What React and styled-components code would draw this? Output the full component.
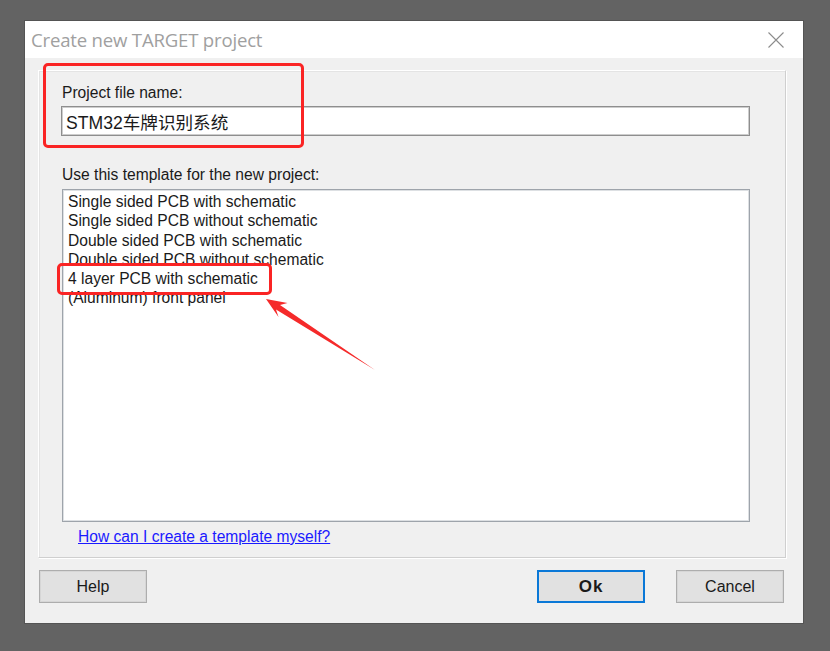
import React from "react";
import styled, { createGlobalStyle } from "styled-components";

const Global = createGlobalStyle`
  html, body { margin: 0; padding: 0; }
  body {
    background: #636363;
    width: 830px;
    height: 651px;
    overflow: hidden;
    font-family: "Liberation Sans", Arial, "Noto Sans CJK SC", sans-serif;
  }
`;

const Page = styled.div`
  padding: 21px 0 0 25px;
`;

const Dialog = styled.div`
  position: relative;
  width: 778px;
  height: 602px;
  background: #f0f0f0;
  display: flex;
  flex-direction: column;
  box-shadow: 0 0 0 1px rgba(0, 0, 0, 0.15);
`;

const TitleBar = styled.div`
  height: 37px;
  flex: none;
  background: #ffffff;
  display: flex;
  align-items: center;
  justify-content: space-between;
  padding: 0 19px 0 6px;
`;

const Title = styled.div`
  font-family: "Open Sans", "Noto Sans", sans-serif;
  font-size: 18.6px;
  color: #a0a0a0;
  letter-spacing: -0.2px;
`;

const CloseIcon = styled.svg`
  width: 16px;
  height: 16px;
  display: block;
`;

const Body = styled.div`
  flex: 1;
  display: flex;
  flex-direction: column;
  padding: 12px 17px 20px 13px;
`;

const Frame = styled.div`
  box-sizing: border-box;
  height: 488px;
  border-top: 1px solid #ffffff;
  border-left: 1px solid #ffffff;
  border-right: 1px solid #cfcfcf;
  border-bottom: 1px solid #cfcfcf;
  box-shadow: 1px 1px 0 #ffffff, inset 1px 1px 0 #e4e4e4;
  display: flex;
  flex-direction: column;
  padding: 12px 35px 0 22px;
`;

const Label = styled.div`
  font-size: 15.6px;
  line-height: 19px;
  color: #1a1a1a;
  padding-left: 1px;
  margin-top: ${(p) => p.$gap || 0}px;
`;

const Input = styled.div`
  box-sizing: border-box;
  margin-top: 4px;
  height: 30px;
  background: #ffffff;
  border: 1px solid #8e8e8e;
  box-shadow: inset 0 0 0 1px #cdcdcd;
  display: flex;
  align-items: center;
  padding-left: 4px;
  font-size: 17.6px;
  color: #1a1a1a;
  font-family: "Liberation Sans", Arial, "Noto Sans CJK SC", sans-serif;
`;

const ListBox = styled.div`
  box-sizing: border-box;
  margin: 5px 0 0 1px;
  height: 333px;
  background: #ffffff;
  border: 1px solid #9ea4ab;
  box-shadow: inset 0 0 0 1px #dde0e3;
  padding: 2px 5px;
`;

const ListItem = styled.div`
  font-size: 15.6px;
  line-height: 19.3px;
  color: #1a1a1a;
  white-space: nowrap;
`;

const Link = styled.a`
  margin: 5px 0 0 17px;
  font-size: 15.6px;
  line-height: 19px;
  color: #1a1aff;
  text-decoration: underline;
  cursor: pointer;
  align-self: flex-start;
`;

const ButtonRow = styled.div`
  margin-top: 12px;
  display: flex;
  justify-content: space-between;
  align-items: center;
  padding: 0 2px 0 1px;
`;

const ButtonGroup = styled.div`
  display: flex;
  gap: 31px;
`;

const Button = styled.button`
  box-sizing: border-box;
  width: 108px;
  height: 33px;
  background: #e1e1e1;
  border: ${(p) => (p.$primary ? "2px solid #0a78d7" : "1px solid #adadad")};
  box-shadow: ${(p) => (p.$primary ? "none" : "inset 0 0 0 1px #d6d6d6")};
  font-family: "Liberation Sans", Arial, sans-serif;
  font-size: ${(p) => (p.$primary ? "17px" : "16px")};
  font-weight: ${(p) => (p.$primary ? 700 : 400)};
  color: #1a1a1a;
  padding: 0;
  letter-spacing: ${(p) => (p.$primary ? "1px" : "0")};
`;

const Annotation = styled.div`
  position: absolute;
  left: ${(p) => p.$x}px;
  top: ${(p) => p.$y}px;
  width: ${(p) => p.$w}px;
  height: ${(p) => p.$h}px;
  box-sizing: border-box;
  border: 3px solid #fa2424;
  border-radius: 5px;
  pointer-events: none;
`;

const ArrowLayer = styled.svg`
  position: absolute;
  left: 0;
  top: 0;
  width: 778px;
  height: 602px;
  pointer-events: none;
`;

const templates = [
  "Single sided PCB with schematic",
  "Single sided PCB without schematic",
  "Double sided PCB with schematic",
  "Double sided PCB without schematic",
  "4 layer PCB with schematic",
  "(Aluminum) front panel",
];

// arrow geometry in dialog coordinates (page minus 25,21)
const ox = 25;
const oy = 21;
const pts = [
  [266, 299],
  [287.5, 303],
  [280, 305],
  [375, 370],
  [276, 309.5],
  [278.5, 317],
]
  .map(([x, y]) => `${x - ox},${y - oy}`)
  .join(" ");

export default function App() {
  return (
    <>
      <Global />
      <Page>
        <Dialog>
          <TitleBar>
            <Title>Create new TARGET project</Title>
            <CloseIcon viewBox="0 0 16 16">
              <path d="M0.5 0.5 L15.5 15.5 M15.5 0.5 L0.5 15.5" stroke="#8c8c8c" strokeWidth="1.1" fill="none" />
            </CloseIcon>
          </TitleBar>
          <Body>
            <Frame>
              <Label>Project file name:</Label>
              <Input>STM32车牌识别系统</Input>
              <Label $gap={29}>Use this template for the new project:</Label>
              <ListBox>
                {templates.map((t) => (
                  <ListItem key={t}>{t}</ListItem>
                ))}
              </ListBox>
              <Link>How can I create a template myself?</Link>
            </Frame>
            <ButtonRow>
              <Button>Help</Button>
              <ButtonGroup>
                <Button $primary>Ok</Button>
                <Button>Cancel</Button>
              </ButtonGroup>
            </ButtonRow>
          </Body>
          <Annotation $x={18} $y={42} $w={261} $h={85} />
          <Annotation $x={32} $y={242} $w={215} $h={32} />
          <ArrowLayer viewBox="0 0 778 602">
            <polygon points={pts} fill="#f52a2a" />
          </ArrowLayer>
        </Dialog>
      </Page>
    </>
  );
}
